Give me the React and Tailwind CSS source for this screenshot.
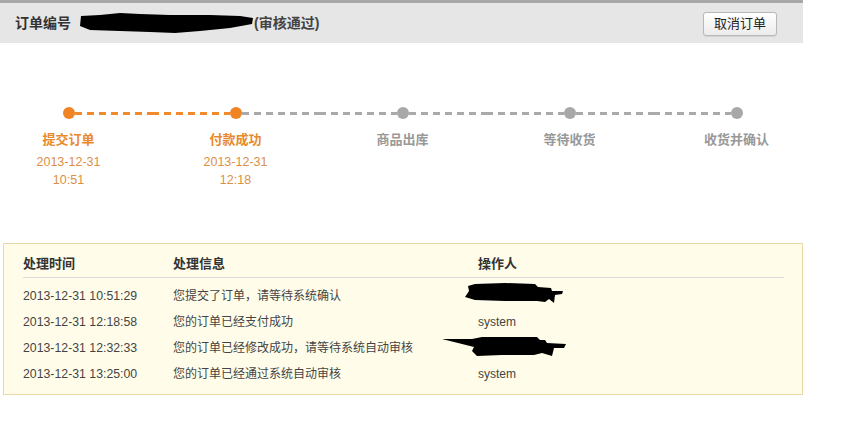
import React from 'react';

const font = { fontFamily: '"Liberation Sans", "Noto Sans CJK SC", sans-serif' };

const steps = [
  { name: '提交订单', date: '2013-12-31', time: '10:51', done: true, lineDone: true },
  { name: '付款成功', date: '2013-12-31', time: '12:18', done: true, lineDone: false },
  { name: '商品出库', done: false, lineDone: false },
  { name: '等待收货', done: false, lineDone: false },
  { name: '收货并确认', done: false, lineDone: false },
];

const logs = [
  { time: '2013-12-31 10:51:29', info: '您提交了订单，请等待系统确认', op: 'blob1' },
  { time: '2013-12-31 12:18:58', info: '您的订单已经支付成功', op: 'system' },
  { time: '2013-12-31 12:32:33', info: '您的订单已经修改成功，请等待系统自动审核', op: 'blob2' },
  { time: '2013-12-31 13:25:00', info: '您的订单已经通过系统自动审核', op: 'system' },
];

const orangeDash = 'h-[3px] flex-1 bg-[repeating-linear-gradient(90deg,#f08a2a_0_7px,transparent_7px_12px)]';
const grayDash = 'h-[3px] flex-1 bg-[repeating-linear-gradient(90deg,#aaaaaa_0_7px,transparent_7px_12px)]';

// 涂黑的遮挡块
const Blob1 = () => (
  <svg width="100" height="22" viewBox="0 0 100 22" className="block">
    <path d="M3 3 L10 1 L40 0 L70 1 L73 4 L86 5 L87 8 L98 8 L97 11 L90 12 L89 20 L84 16 L80 19 L72 18 L40 18 L10 17 L0 14 L4 8 Z" fill="#000" />
  </svg>
);

const Blob2 = () => (
  <svg width="126" height="22" viewBox="0 0 126 22" className="block">
    <path d="M0 3 L30 3 L40 1 L95 1 L98 4 L103 4 L105 7 L124 8 L122 12 L112 12 L110 20 L100 17 L92 19 L60 19 L35 20 L30 15 L32 11 L0 3 Z" fill="#000" />
  </svg>
);

export default function App() {
  return (
    <div className="w-[842px] h-[426px] bg-white overflow-hidden" style={font}>
      {/* Header */}
      <div className="w-[803px] border-t-[3px] border-[#a8a8a8] bg-[#e6e6e6] h-[43px] flex items-center justify-between pl-[15px] pr-[26px]">
        <div className="flex items-center text-[14px] font-bold text-[#333]">
          <span>订单编号</span>
          <svg width="174" height="22" viewBox="0 0 174 22" className="ml-[9px] block">
            <path d="M1 4 L20 3 L40 1 L60 2 L90 3 L130 3 L160 4 L173 6 L172 12 L150 16 L120 19 L95 21 L70 20 L40 19 L10 18 L0 14 Z" fill="#000" />
          </svg>
          <span className="text-[#444]">(审核通过)</span>
        </div>
        <button className="w-[74px] h-[24px] mt-[1px] border border-[#b8b8b8] rounded-[3px] bg-gradient-to-b from-white to-[#ececec] text-[13px] text-[#222] shadow-[0_1px_1px_rgba(0,0,0,0.08)]">
          取消订单
        </button>
      </div>

      {/* 进度 */}
      <div className="flex items-start ml-[-15px] mt-[64px]">
        {steps.map((s, i) => (
          <div key={s.name} className="w-[167px] flex flex-col items-center">
            <div className="w-full h-[12px] flex items-center">
              <div className={i === 0 ? 'flex-1' : steps[i - 1].lineDone ? orangeDash : grayDash} />
              <div className={`w-[12px] h-[12px] rounded-full ${s.done ? 'bg-[#f08323]' : 'bg-[#a8a8a8]'}`} />
              <div className={i === steps.length - 1 ? 'flex-1' : s.lineDone ? orangeDash : grayDash} />
            </div>
            <div className={`mt-[12px] text-[13px] leading-[18px] font-bold ${s.done ? 'text-[#e8892b]' : 'text-[#999]'}`}>
              {s.name}
            </div>
            {s.date && (
              <div className="mt-[4px] text-[12.5px] leading-[18px] text-[#dc8f45] text-center">
                <div>{s.date}</div>
                <div>{s.time}</div>
              </div>
            )}
          </div>
        ))}
      </div>

      {/* 处理记录 */}
      <div className="ml-[3px] mt-[54px] w-[800px] border border-[#e8d9a6] bg-[#fffdea] pt-[7px] pb-[7px] pl-[19px] pr-[18px]">
        <div className="flex items-center h-[27px] pb-[1px] border-b border-[#dddddd] text-[13px] font-bold text-[#333]">
          <div className="w-[150px]">处理时间</div>
          <div className="w-[305px]">处理信息</div>
          <div>操作人</div>
        </div>
        <div className="pt-[5px]">
          {logs.map((r) => (
            <div key={r.time} className="flex items-center h-[26px] text-[12px] text-[#444]">
              <div className="w-[150px] text-[12.3px]">{r.time}</div>
              <div className="w-[305px]">{r.info}</div>
              <div>
                {r.op === 'blob1' ? (
                  <div className="ml-[-13px] mt-[-4px]"><Blob1 /></div>
                ) : r.op === 'blob2' ? (
                  <div className="ml-[-36px] mt-[-2px]"><Blob2 /></div>
                ) : (
                  r.op
                )}
              </div>
            </div>
          ))}
        </div>
      </div>
    </div>
  );
}
